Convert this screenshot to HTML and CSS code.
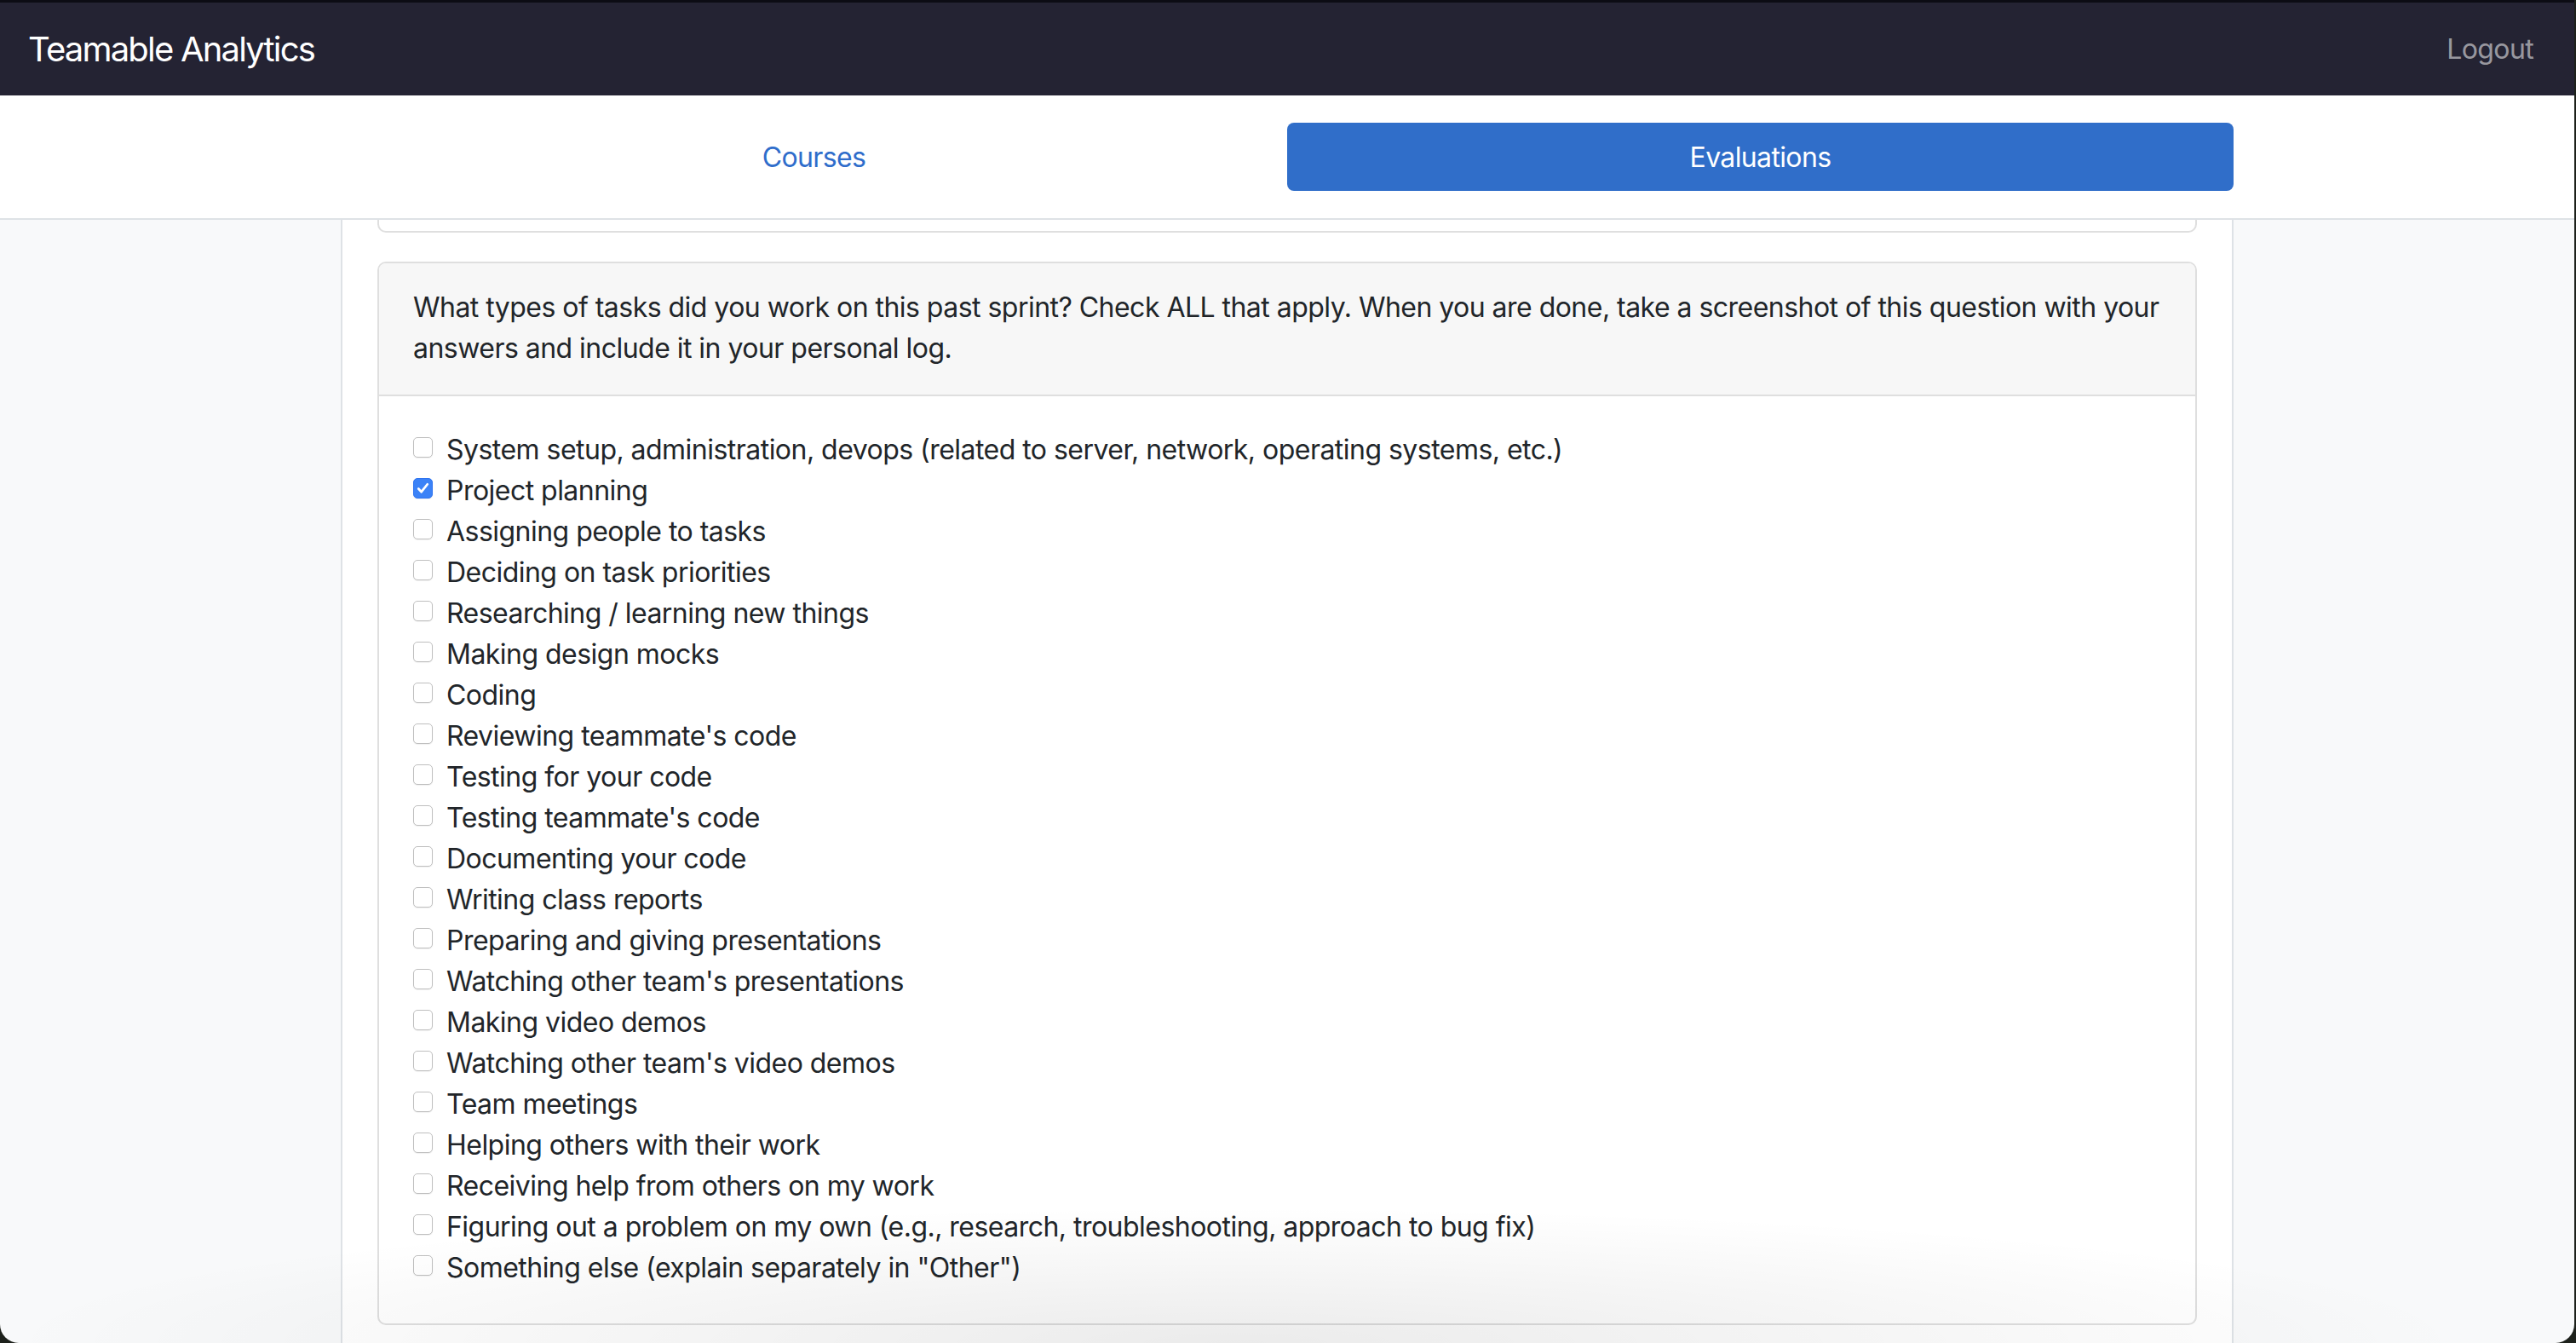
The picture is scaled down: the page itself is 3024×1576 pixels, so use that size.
FILE: index.html
```
<!DOCTYPE html>
<html lang="en">
<head>
<meta charset="utf-8">
<title>Teamable Analytics</title>
<link rel="stylesheet" href="styles.css">
</head>
<body>
<div class="window">
  <nav class="topbar">
    <span class="brand">Teamable Analytics</span>
    <a class="logout" href="#">Logout</a>
  </nav>
  <div class="tabbar">
    <div class="tabs">
      <a class="tab" href="#">Courses</a>
      <a class="tab active" href="#">Evaluations</a>
    </div>
  </div>
  <main class="stage">
    <div class="column">
      <div class="card card-prev"></div>
      <section class="card question">
        <div class="card-header">What types of tasks did you work on this past sprint? Check ALL that apply. When you are done, take a screenshot of this question with your answers and include it in your personal log.</div>
        <div class="card-body">
          <ul class="options">
            <li><label class="option"><input type="checkbox" class="check"><span>System setup, administration, devops (related to server, network, operating systems, etc.)</span></label></li>
            <li><label class="option"><input type="checkbox" class="check" checked><span>Project planning</span></label></li>
            <li><label class="option"><input type="checkbox" class="check"><span>Assigning people to tasks</span></label></li>
            <li><label class="option"><input type="checkbox" class="check"><span>Deciding on task priorities</span></label></li>
            <li><label class="option"><input type="checkbox" class="check"><span>Researching / learning new things</span></label></li>
            <li><label class="option"><input type="checkbox" class="check"><span>Making design mocks</span></label></li>
            <li><label class="option"><input type="checkbox" class="check"><span>Coding</span></label></li>
            <li><label class="option"><input type="checkbox" class="check"><span>Reviewing teammate's code</span></label></li>
            <li><label class="option"><input type="checkbox" class="check"><span>Testing for your code</span></label></li>
            <li><label class="option"><input type="checkbox" class="check"><span>Testing teammate's code</span></label></li>
            <li><label class="option"><input type="checkbox" class="check"><span>Documenting your code</span></label></li>
            <li><label class="option"><input type="checkbox" class="check"><span>Writing class reports</span></label></li>
            <li><label class="option"><input type="checkbox" class="check"><span>Preparing and giving presentations</span></label></li>
            <li><label class="option"><input type="checkbox" class="check"><span>Watching other team's presentations</span></label></li>
            <li><label class="option"><input type="checkbox" class="check"><span>Making video demos</span></label></li>
            <li><label class="option"><input type="checkbox" class="check"><span>Watching other team's video demos</span></label></li>
            <li><label class="option"><input type="checkbox" class="check"><span>Team meetings</span></label></li>
            <li><label class="option"><input type="checkbox" class="check"><span>Helping others with their work</span></label></li>
            <li><label class="option"><input type="checkbox" class="check"><span>Receiving help from others on my work</span></label></li>
            <li><label class="option"><input type="checkbox" class="check"><span>Figuring out a problem on my own (e.g., research, troubleshooting, approach to bug fix)</span></label></li>
            <li><label class="option"><input type="checkbox" class="check"><span>Something else (explain separately in "Other")</span></label></li>
          </ul>
        </div>
      </section>
    </div>
  </main>
  <div class="shade"></div>
</div>
</body>
</html>
```
FILE: styles.css
```
* { box-sizing: border-box; }

html, body {
  margin: 0;
  height: 100%;
}

body {
  background: #1d211b;
  font-family: Inter, "Liberation Sans", Arial, sans-serif;
  color: #212529;
  letter-spacing: -0.033em;
  overflow: hidden;
}

.window {
  position: relative;
  width: calc(100% - 2px);
  height: 100%;
  display: flex;
  flex-direction: column;
  border-radius: 0 0 22px 22px;
  overflow: hidden;
  background: #f8f9fa;
}

.topbar {
  height: 112px;
  flex: none;
  background: #242333;
  border-top: 3px solid #0c0c14;
  display: flex;
  align-items: center;
  justify-content: space-between;
  padding: 0 48px 0 33px;
}

.brand {
  color: #ffffff;
  font-size: 40px;
  line-height: 60px;
  letter-spacing: -0.045em;
}

.logout {
  color: rgba(255, 255, 255, 0.55);
  font-size: 32px;
  line-height: 48px;
  letter-spacing: -0.02em;
  text-decoration: none;
}

.tabbar {
  flex: none;
  background: #ffffff;
  border-bottom: 2px solid #dee2e6;
  padding: 32px 0;
}

.tabs {
  width: 2222px;
  margin: 0 auto;
  display: grid;
  grid-template-columns: 1fr 1fr;
}

.tab {
  display: block;
  text-align: center;
  font-size: 32px;
  line-height: 48px;
  letter-spacing: -0.02em;
  padding: 17px 0 15px;
  color: #2f6dcb;
  text-decoration: none;
  border-radius: 8px;
}

.tab.active {
  background: #306ec9;
  color: #ffffff;
}

.stage {
  flex: 1;
  display: flex;
  justify-content: center;
  min-height: 0;
}

.column {
  width: 2222px;
  background: #ffffff;
  border-left: 2px solid #dee2e6;
  border-right: 2px solid #dee2e6;
  padding: 0 41px;
}

.card {
  border: 2px solid #dfdfdf;
  border-radius: 10px;
  background: #ffffff;
}

.card-prev {
  height: 15px;
  border-top: none;
  border-radius: 0 0 10px 10px;
  margin-bottom: 34px;
}

.card-header {
  background: #f7f7f7;
  border-bottom: 2px solid #dfdfdf;
  border-radius: 8px 8px 0 0;
  padding: 28px 36px 30px 40px;
  font-size: 32px;
  line-height: 48px;
}

.card-body {
  padding: 39px 40px 41px;
}

.options {
  list-style: none;
  margin: 0;
  padding: 0;
}

.option {
  display: flex;
  align-items: flex-start;
  font-size: 32px;
  line-height: 48px;
}

.check {
  appearance: none;
  -webkit-appearance: none;
  flex: none;
  width: 23px;
  height: 24px;
  margin: 9px 16px 0 0;
  border: 1.5px solid #bfbfbf;
  border-radius: 5px;
  background: #ffffff;
  box-shadow: 0 1px 1px rgba(0, 0, 0, 0.06);
}

.check:checked {
  border-color: #2f74f0;
  background-color: #3b82f7;
  background-image: url("data:image/svg+xml,%3Csvg xmlns='http://www.w3.org/2000/svg' viewBox='0 0 20 20'%3E%3Cpath d='M5 10.5l3.3 3.5L15 5.5' fill='none' stroke='white' stroke-width='2.6' stroke-linecap='round' stroke-linejoin='round'/%3E%3C/svg%3E");
  background-size: 100% 100%;
}

.shade {
  position: absolute;
  left: 0;
  right: 0;
  bottom: 0;
  height: 160px;
  pointer-events: none;
  background: radial-gradient(ellipse 48% 100% at 48% 100%, rgba(0, 0, 0, 0.08), rgba(0, 0, 0, 0.03) 60%, rgba(0, 0, 0, 0) 100%);
}
```
